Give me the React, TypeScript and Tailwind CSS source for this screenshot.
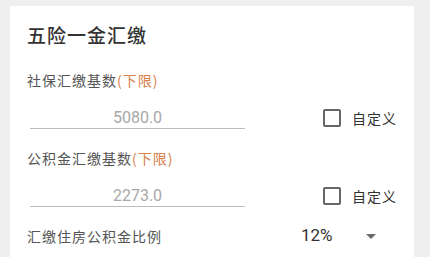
const font = { fontFamily: '"Noto Sans CJK SC", Roboto, sans-serif' };
const num = { fontFamily: 'Roboto, "Noto Sans CJK SC", sans-serif' };

const Checkbox = () => (
  <div className="flex items-center gap-[11px]">
    <div className="h-[18px] w-[18px] rounded-[2px] border-2 border-[#666]" />
    <span className="text-[14px] tracking-[1px] text-[#333]">自定义</span>
  </div>
);

const BaseRow = ({ label, value }: { label: string; value: string }) => (
  <>
    <div className="flex h-[24px] items-center text-[14px] tracking-[1px] text-[#555]">
      {label}
      <span className="text-[#d9804b]">(下限)</span>
    </div>
    <div className="flex h-[37px] items-end">
      <div
        className="ml-[3px] flex h-[22px] w-[215px] items-center justify-center border-b border-[#bdbdbd] text-[16px] text-[#a8a8a8]"
        style={num}
      >
        {value}
      </div>
      <div className="mb-[1px] ml-[78px] flex h-[20px] items-center">
        <Checkbox />
      </div>
    </div>
  </>
);

export default function App() {
  return (
    <div className="h-[257px] w-[430px] overflow-hidden bg-[#efefef] pl-[10px] pt-[6px]" style={font}>
      <div className="h-[260px] w-[404px] bg-white pl-[17px] pt-[16px]">
        <div className="flex h-[26px] items-center text-[19px] font-medium tracking-[1px] text-[#333]">
          五险一金汇缴
        </div>
        <div className="h-[20px]" />
        <BaseRow label="社保汇缴基数" value="5080.0" />
        <div className="h-[17px]" />
        <BaseRow label="公积金汇缴基数" value="2273.0" />
        <div className="flex h-[58px] items-center">
          <span className="w-[274px] text-[14px] tracking-[1px] text-[#555]">汇缴住房公积金比例</span>
          <span className="text-[17px] text-[#333]" style={num}>
            12%
          </span>
          <svg className="ml-[33px]" width="10" height="5" viewBox="0 0 10 5">
            <path d="M0 0h10L5 5z" fill="#6b6b6b" />
          </svg>
        </div>
      </div>
    </div>
  );
}
